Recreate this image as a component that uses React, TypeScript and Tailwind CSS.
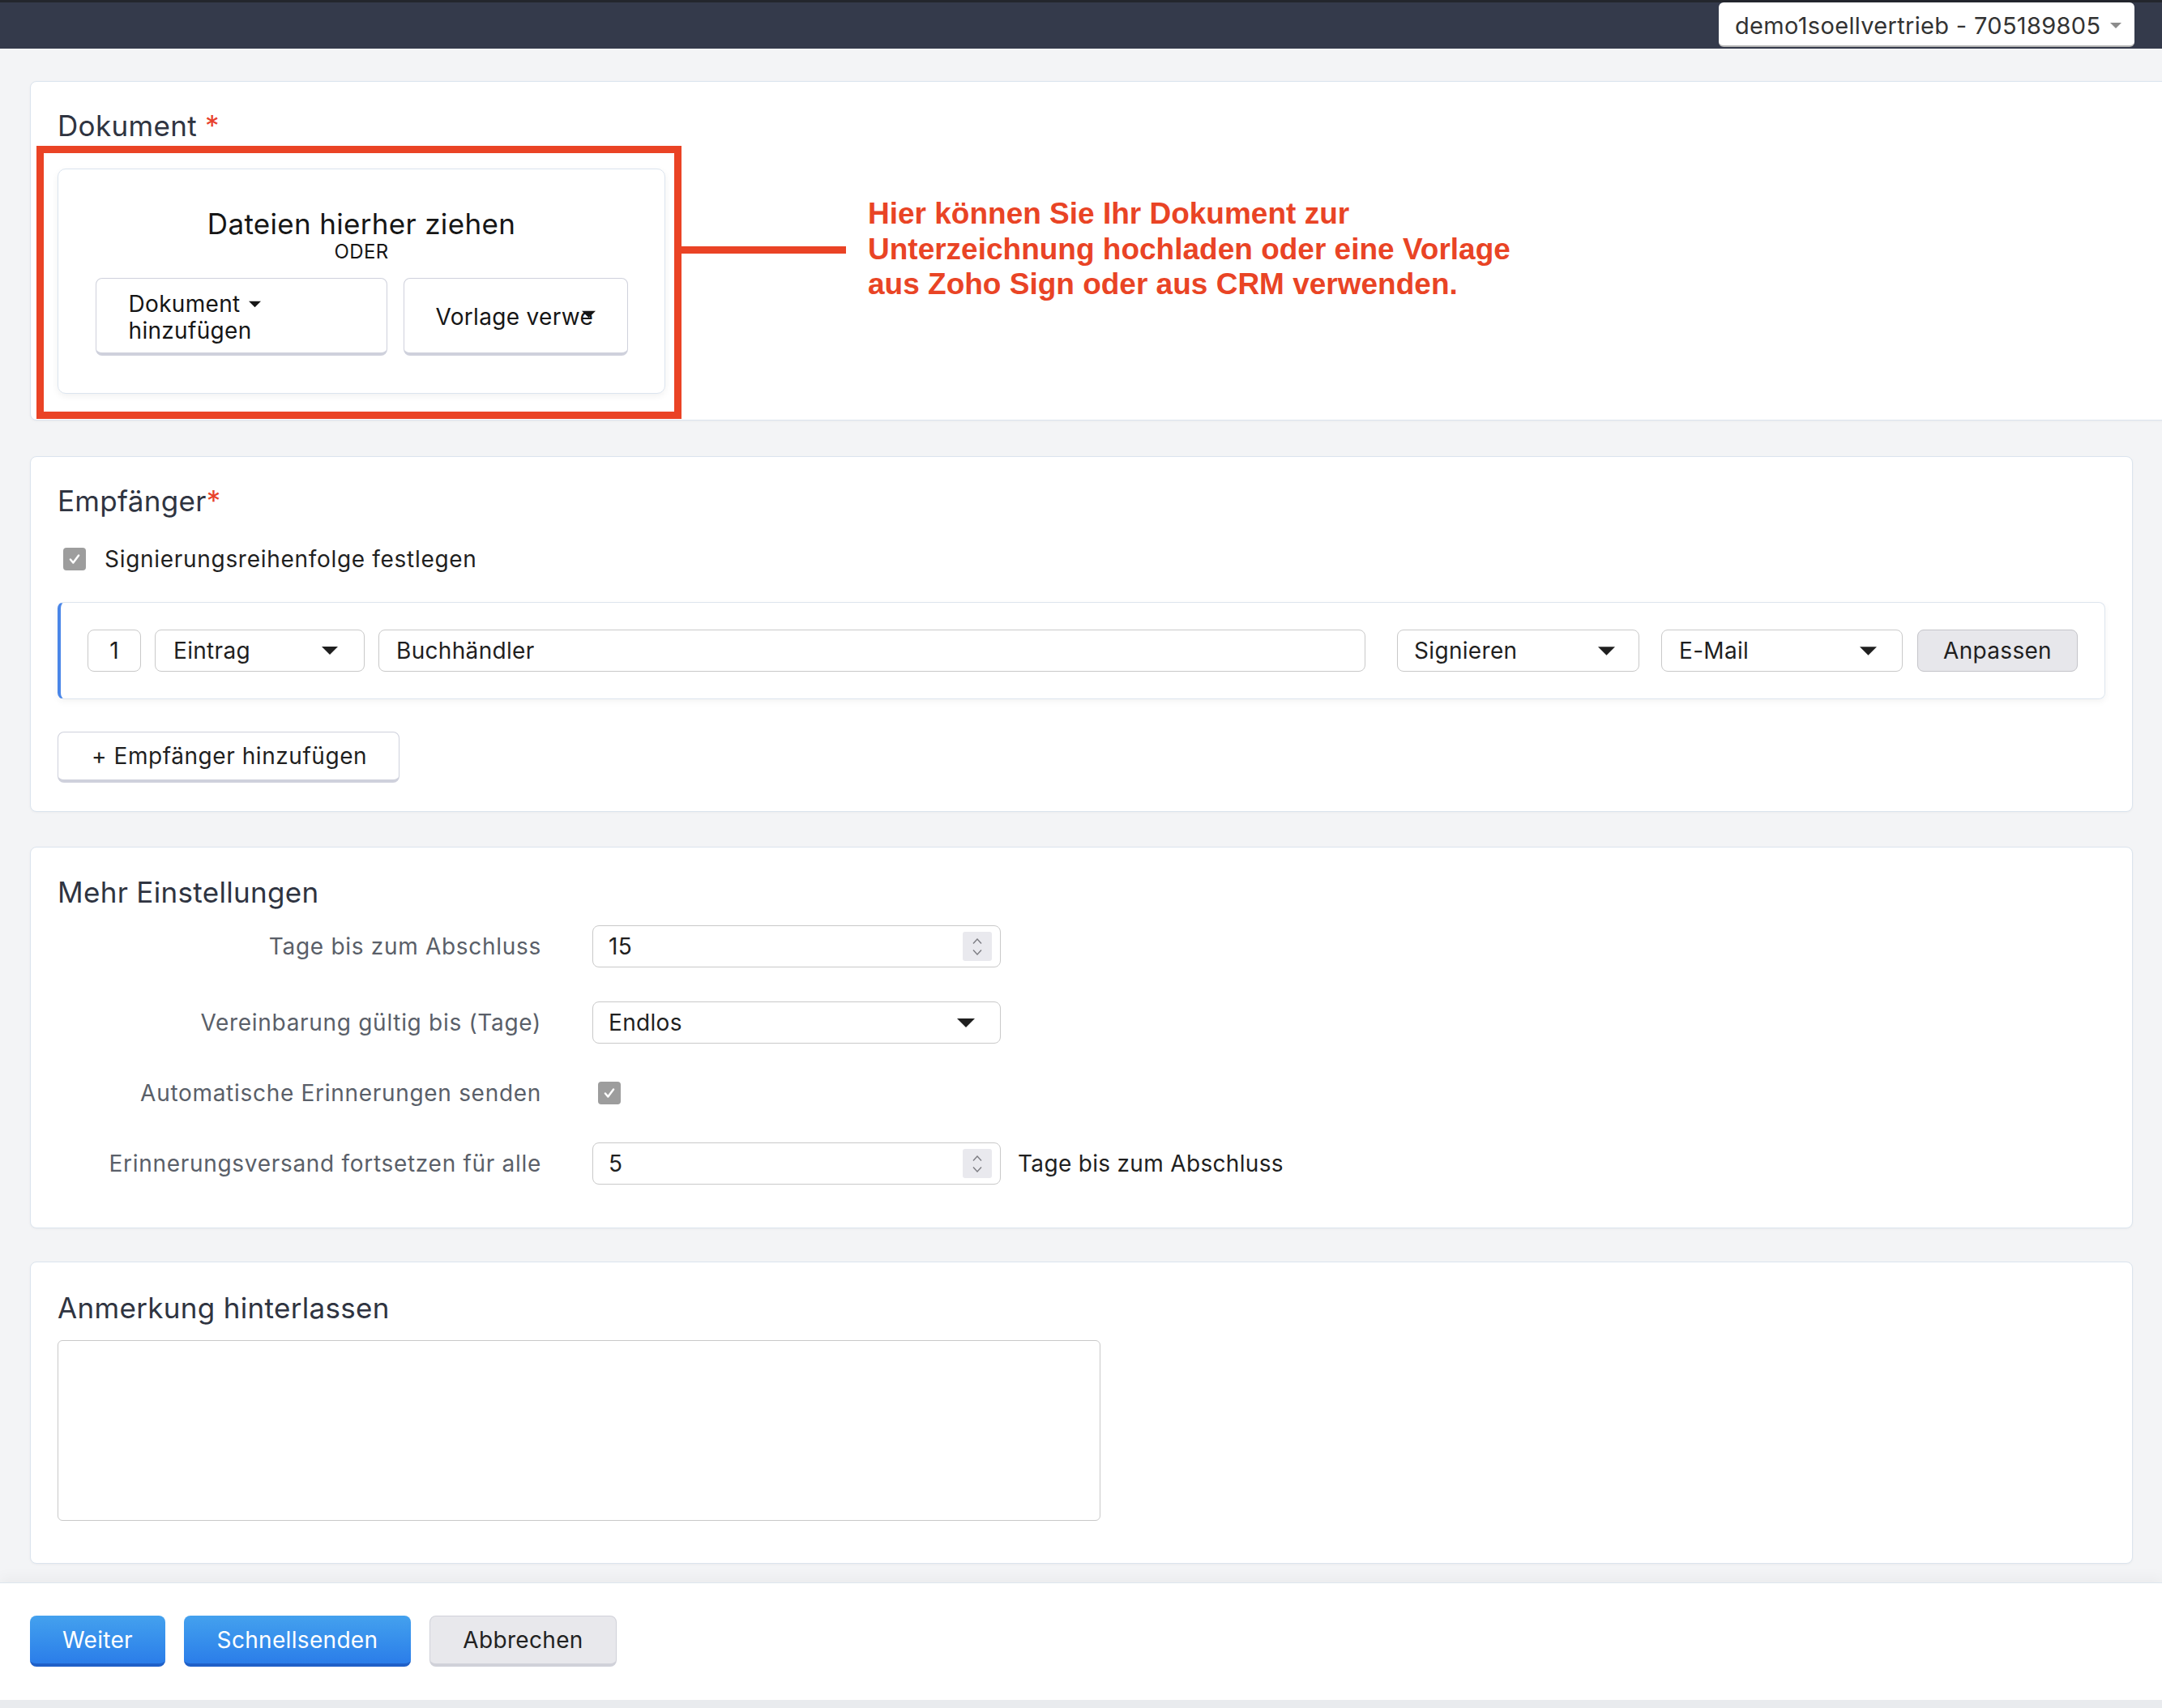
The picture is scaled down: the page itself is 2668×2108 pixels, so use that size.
import React from "react";

function Caret({ className = "" }: { className?: string }) {
  return (
    <svg viewBox="0 0 20 10" className={className} fill="currentColor">
      <path d="M0 0h20L10 10z" />
    </svg>
  );
}

function Checkbox() {
  return (
    <span className="w-[28px] h-[28px] rounded-[4px] bg-[#9d9d9d] flex items-center justify-center shrink-0">
      <svg viewBox="0 0 16 16" className="w-[18px] h-[18px]" fill="none" stroke="#fff" strokeWidth="2.2" strokeLinecap="round" strokeLinejoin="round">
        <path d="M3.5 8.5l3 3.5 6-8" />
      </svg>
    </span>
  );
}

function Spinner() {
  return (
    <span className="w-[36px] h-[36px] bg-[#e9e9ee] rounded-[3px] flex flex-col items-center justify-center gap-[7px]">
      <svg viewBox="0 0 12 7" className="w-[12px] h-[7px]" fill="none" stroke="#7d7d83" strokeWidth="1.4">
        <path d="M1 6.5L6 1l5 5.5" />
      </svg>
      <svg viewBox="0 0 12 7" className="w-[12px] h-[7px]" fill="none" stroke="#7d7d83" strokeWidth="1.4">
        <path d="M1 0.5L6 6l5-5.5" />
      </svg>
    </span>
  );
}

const input = "h-[52px] bg-white border border-[#c9c9c9] rounded-[8px] flex items-center text-[28px] text-[#1f1f1f]";
const title = "text-[35px] leading-[40px] text-[#2f3441]";

export default function App() {
  return (
    <div className="min-h-screen w-full overflow-hidden bg-[#f3f4f6] font-['Inter',sans-serif] tracking-[0.02em] text-[#1f2328]">
      <header className="h-[60px] bg-[#343a4b] border-t-[3px] border-[#23262d] flex justify-end items-start pr-[34px]">
        <div className="h-[55px] w-[513px] bg-white rounded-[6px] border-b-2 border-[#b4b4b4] flex items-center justify-between pt-[4px] pl-[20px] pr-[16px] text-[29px] text-[#333]">
          <span>demo1soellvertrieb - 705189805</span>
          <Caret className="w-[14px] h-[9px] text-[#8c8c8c]" />
        </div>
      </header>

      <main className="pt-[40px] pl-[37px] pr-[36px] flex flex-col">
        {/* Dokument */}
        <section className="-mr-[60px] bg-white border border-[#dbe4ee] rounded-[8px] pt-[34px] pl-[33px] pb-[32px] shadow-[0_1px_3px_rgba(0,0,0,0.04)]">
          <h2 className={title}>
            Dokument <span className="text-[#e8412c]">*</span>
          </h2>
          <div className="relative mt-[33px] w-[750px]">
            <div className="h-[278px] rounded-[10px] border border-[#dbe4ee] shadow-[0_3px_8px_rgba(0,0,0,0.06)] flex flex-col items-center pt-[46px]">
              <div className="text-[35px] leading-[42px] text-[#161616]">Dateien hierher ziehen</div>
              <div className="text-[24px] leading-[28px] text-[#161616]">ODER</div>
              <div className="mt-[18px] flex gap-[20px]">
                <button className="w-[360px] h-[96px] bg-white border border-[#cfd1dc] border-b-4 rounded-[8px] pt-[5px] pl-[40px] text-left text-[28px] leading-[33px] text-[#161616]">
                  Dokument
                  <Caret className="inline-block ml-[10px] w-[15px] h-[9px] align-middle -mt-[4px]" />
                  <br />
                  hinzufügen
                </button>
                <button className="w-[277px] h-[96px] bg-white border border-[#cfd1dc] border-b-4 rounded-[8px] pt-[2px] pl-[39px] text-left text-[28px] text-[#161616] flex items-center">
                  <span>Vorlage verwe</span>
                  <Caret className="w-[17px] h-[10px] -ml-[14px] -mt-[6px]" />
                </button>
              </div>
            </div>

            {/* annotation */}
            <div className="absolute -left-[26px] -top-[28px] w-[796px] h-[337px] border-[9px] border-[#ea4325]" />
            <div className="absolute left-[770px] top-[96px] w-[203px] h-[9px] bg-[#ea4325]" />
            <p className="absolute left-[1000px] top-[34px] w-[900px] font-['Liberation_Sans',Arial,sans-serif] font-bold tracking-normal text-[37px] leading-[43.5px] text-[#e94425]">
              Hier können Sie Ihr Dokument zur
              <br />
              Unterzeichnung hochladen oder eine Vorlage
              <br />
              aus Zoho Sign oder aus CRM verwenden.
            </p>
          </div>
        </section>

        {/* Empfänger */}
        <section className="mt-[44px] bg-white border border-[#dbe4ee] rounded-[8px] pt-[34px] px-[33px] pb-[35px] shadow-[0_1px_3px_rgba(0,0,0,0.04)]">
          <h2 className={title}>
            Empfänger<span className="text-[#e8412c]">*</span>
          </h2>
          <label className="mt-[32px] h-[40px] flex items-center gap-[23px] pl-[7px] text-[28px] tracking-[0.025em] text-[#1f1f1f]">
            <Checkbox />
            Signierungsreihenfolge festlegen
          </label>
          <div className="mt-[33px] h-[120px] border border-[#dde5ee] border-l-4 border-l-[#4a86e8] rounded-[8px] flex items-center px-[33px] shadow-[0_3px_8px_rgba(0,0,0,0.05)]">
            <div className={`${input} w-[66px] justify-center`}>1</div>
            <div className={`${input} ml-[17px] w-[259px] pl-[22px] pr-[32px] justify-between`}>
              Eintrag
              <Caret className="w-[20px] h-[10px]" />
            </div>
            <div className={`${input} ml-[17px] flex-1 pl-[21px]`}>Buchhändler</div>
            <div className={`${input} ml-[39px] w-[299px] pl-[20px] pr-[29px] justify-between`}>
              Signieren
              <Caret className="w-[21px] h-[11px]" />
            </div>
            <div className={`${input} ml-[27px] w-[298px] pl-[21px] pr-[31px] justify-between`}>
              E-Mail
              <Caret className="w-[21px] h-[11px]" />
            </div>
            <button className="ml-[18px] w-[198px] h-[52px] bg-[#e7e7eb] border border-[#c4c4c9] rounded-[8px] text-[28px] text-[#1f1f1f]">
              Anpassen
            </button>
          </div>
          <button className="mt-[40px] w-[422px] h-[63px] bg-white border border-[#cfd1dc] border-b-4 rounded-[8px] pl-[41px] text-left text-[28px] tracking-[0.02em] text-[#1f1f1f]">
            + Empfänger hinzufügen
          </button>
        </section>

        {/* Mehr Einstellungen */}
        <section className="mt-[43px] bg-white border border-[#dbe4ee] rounded-[8px] pt-[35px] px-[33px] pb-[53px] shadow-[0_1px_3px_rgba(0,0,0,0.04)]">
          <h2 className={title}>Mehr Einstellungen</h2>
          <div className="mt-[21px] grid grid-cols-[597px_504px_1fr] gap-x-[63px] gap-y-[42px] items-center text-[28px] text-[#5a5f69]">
            <div className="text-right tracking-[0.025em]">Tage bis zum Abschluss</div>
            <div className={`${input} pl-[19px] pr-[10px] justify-between`}>
              15
              <Spinner />
            </div>
            <div />

            <div className="text-right tracking-[0.025em]">Vereinbarung gültig bis (Tage)</div>
            <div className={`${input} pl-[19px] pr-[31px] justify-between`}>
              Endlos
              <Caret className="w-[22px] h-[11px]" />
            </div>
            <div />

            <div className="text-right tracking-[0.025em] h-[38px] flex items-center justify-end">Automatische Erinnerungen senden</div>
            <div className="pl-[7px]">
              <Checkbox />
            </div>
            <div />

            <div className="text-right tracking-[0.025em]">Erinnerungsversand fortsetzen für alle</div>
            <div className={`${input} pl-[19px] pr-[10px] justify-between`}>
              5
              <Spinner />
            </div>
            <div className="-ml-[42px] text-[28px] text-[#1f1f1f]">Tage bis zum Abschluss</div>
          </div>
        </section>

        {/* Anmerkung */}
        <section className="mt-[41px] bg-white border border-[#dbe4ee] rounded-[8px] pt-[36px] px-[33px] pb-[52px] shadow-[0_1px_3px_rgba(0,0,0,0.04)]">
          <h2 className={title}>Anmerkung hinterlassen</h2>
          <textarea className="mt-[20px] block w-[1287px] h-[223px] border border-[#c9c9c9] rounded-[6px] resize-none outline-none" />
        </section>
      </main>

      <footer className="mt-[23px] h-[145px] bg-white border-t border-[#dde6ee] pt-[40px] pl-[37px] flex items-start gap-[23px] shadow-[0_-8px_14px_rgba(0,0,0,0.03)]">
        <button className="w-[167px] h-[63px] rounded-[8px] bg-gradient-to-b from-[#44a1ee] to-[#2b7de9] border-b-4 border-[#1f60c8] text-[28px] text-white">
          Weiter
        </button>
        <button className="w-[280px] h-[63px] rounded-[8px] bg-gradient-to-b from-[#44a1ee] to-[#2b7de9] border-b-4 border-[#1f60c8] text-[28px] text-white">
          Schnellsenden
        </button>
        <button className="w-[231px] h-[63px] rounded-[8px] bg-[#e8e8ec] border border-[#d0d1d9] border-b-4 text-[28px] text-[#222]">
          Abbrechen
        </button>
      </footer>
      <div className="h-[10px] bg-[#e9ebee]" />
    </div>
  );
}
